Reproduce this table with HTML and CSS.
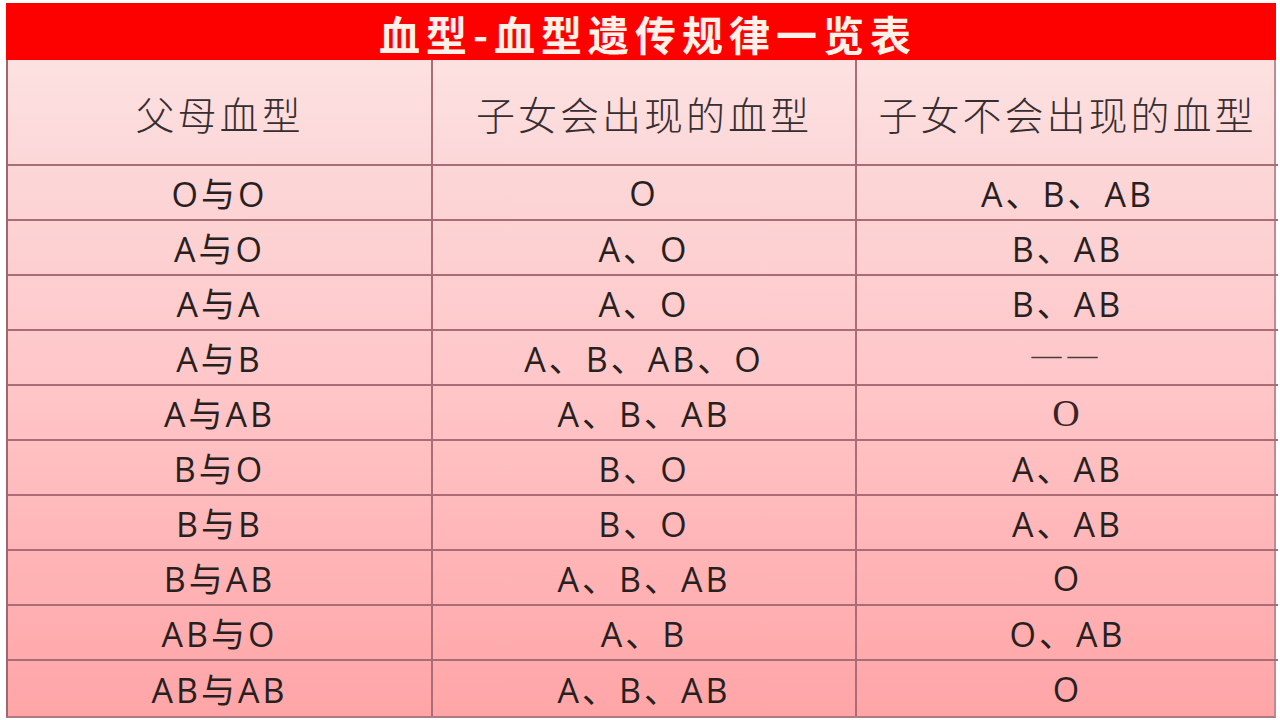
FILE: index.html
```html
<!DOCTYPE html>
<html lang="zh-CN">
<head>
<meta charset="utf-8">
<title>血型-血型遗传规律一览表</title>
<link rel="stylesheet" href="styles.css">
</head>
<body>
<div class="sheet">
  <div class="title">血型-血型遗传规律一览表</div>
  <div class="grid">
    <div class="cell head">父母血型</div>
    <div class="cell head">子女会出现的血型</div>
    <div class="cell head">子女不会出现的血型</div>

    <div class="cell">O与O</div>
    <div class="cell">O</div>
    <div class="cell">A、B、AB</div>

    <div class="cell">A与O</div>
    <div class="cell">A、O</div>
    <div class="cell">B、AB</div>

    <div class="cell">A与A</div>
    <div class="cell">A、O</div>
    <div class="cell">B、AB</div>

    <div class="cell">A与B</div>
    <div class="cell">A、B、AB、O</div>
    <div class="cell dash">——</div>

    <div class="cell">A与AB</div>
    <div class="cell">A、B、AB</div>
    <div class="cell serif">O</div>

    <div class="cell">B与O</div>
    <div class="cell">B、O</div>
    <div class="cell">A、AB</div>

    <div class="cell">B与B</div>
    <div class="cell">B、O</div>
    <div class="cell">A、AB</div>

    <div class="cell">B与AB</div>
    <div class="cell">A、B、AB</div>
    <div class="cell">O</div>

    <div class="cell">AB与O</div>
    <div class="cell">A、B</div>
    <div class="cell">O、AB</div>

    <div class="cell">AB与AB</div>
    <div class="cell">A、B、AB</div>
    <div class="cell">O</div>
  </div>
</div>
</body>
</html>
```

FILE: styles.css
```css
html, body {
  margin: 0;
  padding: 0;
  background: #ffffff;
}

body {
  width: 1280px;
  height: 720px;
  overflow: hidden;
}

.sheet {
  margin: 3px 4px 0 6px;
  width: 1270px;
  display: flex;
  flex-direction: column;
}

.title {
  height: 57px;
  background: #fd0000;
  color: #fff1e8;
  font-family: "Noto Sans CJK SC", "Noto Sans CJK JP", sans-serif;
  font-weight: 700;
  font-size: 41px;
  letter-spacing: 6px;
  line-height: 60px;
  text-align: center;
  padding-left: 14px;
  box-sizing: border-box;
}

.grid {
  display: grid;
  grid-template-columns: 425px 424px 421px;
  grid-template-rows: 106px repeat(10, 55px);
  background: linear-gradient(to bottom, #fde1e1 0%, #fcd6d7 18%, #ffc6c8 50%, #ffb3b5 78%, #ffa5a8 100%);
  border-left: 2px solid #a06670;
  border-right: 2px solid #c08a92;
  border-bottom: 2px solid #b07880;
  box-sizing: border-box;
}

.cell {
  display: flex;
  align-items: center;
  justify-content: center;
  border-bottom: 2px solid #aa6c76;
  border-right: 2px solid #aa6c76;
  font-family: "Open Sans", "Noto Sans CJK SC", sans-serif;
  font-size: 34px;
  letter-spacing: 3px;
  color: #281f21;
  box-sizing: border-box;
}

.cell:nth-child(3n) {
  border-right: none;
}

.cell:nth-last-child(-n+3) {
  border-bottom: none;
}

.head {
  font-family: "Noto Sans CJK SC", "Noto Sans CJK JP", sans-serif;
  font-weight: 300;
  font-size: 39px;
  letter-spacing: 3px;
  color: #362e30;
  padding-top: 2px;
}

.dash {
  font-family: "Liberation Serif", serif;
  font-size: 30px;
  letter-spacing: 6px;
  color: #4a3a3c;
  padding-bottom: 6px;
}

.serif {
  font-family: "Liberation Serif", serif;
  font-size: 38px;
  color: #3a2428;
}
```
